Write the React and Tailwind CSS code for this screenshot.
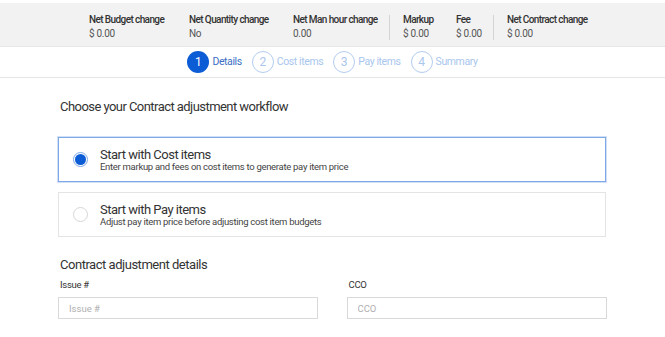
import React from 'react'

const stats = [
  { label: 'Net Budget change', value: '$ 0.00', w: 'w-[100px]' },
  { label: 'Net Quantity change', value: 'No', w: 'w-[104px]' },
  { label: 'Net Man hour change', value: '0.00', w: 'w-[96px]', divider: true },
  { label: 'Markup', value: '$ 0.00', w: 'w-[53px]' },
  { label: 'Fee', value: '$ 0.00', w: 'w-[37px]', divider: true },
  { label: 'Net Contract change', value: '$ 0.00', w: 'w-[100px]' },
]

const steps = [
  { n: 1, label: 'Details', active: true },
  { n: 2, label: 'Cost items' },
  { n: 3, label: 'Pay items' },
  { n: 4, label: 'Summary' },
]

function Radio({ checked }) {
  return checked ? (
    <span className="flex h-[15px] w-[15px] shrink-0 items-center justify-center rounded-full border border-[#7fa9e6] bg-white">
      <span className="h-[11px] w-[11px] rounded-full bg-[#0b5cd5]" />
    </span>
  ) : (
    <span className="h-[15px] w-[15px] shrink-0 rounded-full border border-[#d6d6d6] bg-white" />
  )
}

export default function App() {
  return (
    <div className="h-[337px] w-[665px] overflow-hidden bg-white font-['Roboto',sans-serif] text-[#333]">
      {/* summary strip */}
      <div className="mt-[3px] flex h-[43px] items-start bg-[#f2f2f2] pl-[89px] pt-[10px]">
        {stats.map((s) => (
          <div key={s.label} className="flex">
            <div className={s.w}>
              <div className="text-[10px] font-medium leading-[14px] tracking-[-0.6px] text-[#333]">{s.label}</div>
              <div className="text-[10px] leading-[14px] tracking-[-0.3px] text-[#555]">{s.value}</div>
            </div>
            {s.divider && <div className="mr-[13px] mt-[2px] h-[25px] w-px bg-[#d4d4d4]" />}
          </div>
        ))}
      </div>

      {/* stepper */}
      <div className="flex h-[32px] items-center justify-center gap-[10px] border-y border-[#e6e6e6]">
        {steps.map((s) => (
          <div key={s.n} className="flex items-center gap-[3px]">
            <span
              className={
                s.active
                  ? 'flex h-[22px] w-[22px] items-center justify-center rounded-full bg-[#0b5cd5] text-[12px] text-white'
                  : 'flex h-[22px] w-[22px] items-center justify-center rounded-full border border-[#b3cdf0] text-[12px] text-[#a9c6ee]'
              }
            >
              {s.n}
            </span>
            <span
              className={
                s.active
                  ? 'text-[10.5px] tracking-[-0.4px] text-[#3d6fc4]'
                  : 'text-[10.5px] tracking-[-0.4px] text-[#a9c6ee]'
              }
            >
              {s.label}
            </span>
          </div>
        ))}
      </div>

      <div className="pl-[58px] pr-[59px]">
        <h2 className="mt-[20px] pl-[2px] text-[13px] leading-[18px] tracking-[-0.55px] text-[#333]">
          Choose your Contract adjustment workflow
        </h2>

        <div className="mt-[21px] flex flex-col gap-[10px]">
          <label className="flex h-[45px] items-center gap-[12px] border border-[#7fa9e6] pl-[14px] shadow-[0_0_0_1px_#cfe0f7]">
            <Radio checked />
            <div className="pt-[1px]">
              <div className="text-[13px] leading-[13px] tracking-[-0.5px] text-[#333]">Start with Cost items</div>
              <div className="text-[9.5px] leading-[11px] tracking-[-0.3px] text-[#444]">
                Enter markup and fees on cost items to generate pay item price
              </div>
            </div>
          </label>
          <label className="flex h-[45px] items-center gap-[12px] border border-[#e4e4e4] pl-[14px]">
            <Radio />
            <div className="pt-[1px]">
              <div className="text-[13px] leading-[13px] tracking-[-0.5px] text-[#333]">Start with Pay items</div>
              <div className="text-[9.5px] leading-[11px] tracking-[-0.3px] text-[#444]">
                Adjust pay item price before adjusting cost item budgets
              </div>
            </div>
          </label>
        </div>

        <h2 className="mt-[19px] pl-[2px] text-[13px] leading-[18px] tracking-[-0.47px] text-[#333]">
          Contract adjustment details
        </h2>

        <div className="mt-[5px] grid grid-cols-2 gap-[29px]">
          <div>
            <div className="pl-[2px] text-[9.5px] leading-[12px] tracking-[-0.3px] text-[#333]">Issue #</div>
            <input
              placeholder="Issue #"
              className="mt-[6px] h-[22px] w-[260px] border border-[#d9d9d9] px-[10px] text-[9.5px] text-[#333] outline-none placeholder:text-[#b0b0b0]"
            />
          </div>
          <div>
            <div className="pl-[2px] text-[9.5px] leading-[12px] tracking-[-0.3px] text-[#333]">CCO</div>
            <input
              placeholder="CCO"
              className="mt-[6px] h-[22px] w-[260px] border border-[#d9d9d9] px-[10px] text-[9.5px] text-[#333] outline-none placeholder:text-[#b0b0b0]"
            />
          </div>
        </div>
      </div>
    </div>
  )
}
